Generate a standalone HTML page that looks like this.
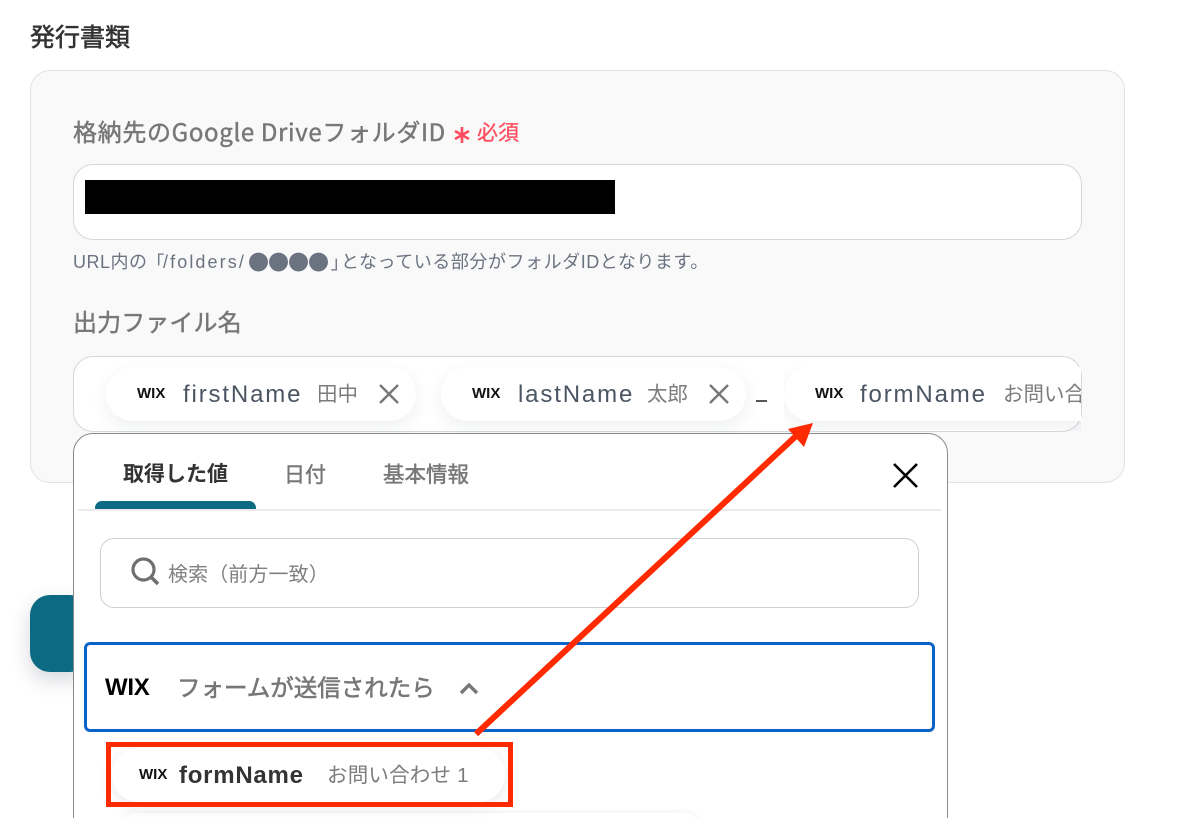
<!DOCTYPE html>
<html lang="ja">
<head>
<meta charset="utf-8">
<style>
html,body{margin:0;padding:0;background:#fff;width:1192px;height:818px;overflow:hidden}
#p{position:absolute;left:0;top:0;width:1192px;height:818px;overflow:hidden;font-family:"Liberation Sans","Noto Sans CJK JP",sans-serif}
.a{position:absolute;white-space:nowrap;box-sizing:border-box}
.chip{background:#fff;border-radius:27px;box-shadow:0 6px 18px rgba(30,40,60,.07);height:54px}
.wix{font-weight:700;color:#111;letter-spacing:0}
.name{font-size:24px;color:#4b5563;letter-spacing:1.85px;line-height:30px}
.val{font-size:20.5px;color:#7c7c7c;line-height:28px}
.lab{font-family:"Noto Sans CJK JP","Liberation Sans",sans-serif;font-weight:400;-webkit-text-stroke:.45px currentColor}
.h{font-size:18px;line-height:26px;color:#6b7280;top:249px}
</style>
</head>
<body>
<div id="p">
<div class="a lab" style="left:30px;top:20px;font-size:25px;line-height:32px;color:#333;-webkit-text-stroke:.6px #333">発行書類</div>

<div class="a" style="left:30px;top:70px;width:1095px;height:413px;background:#f9f9fa;border:1px solid #dfe2e7;border-radius:20px"></div>

<div class="a lab" style="left:73px;top:115px;font-size:24px;line-height:32px;color:#777;letter-spacing:.66px">格納先のGoogle DriveフォルダID</div>
<svg class="a" style="left:454px;top:126px" width="16" height="18" viewBox="0 0 16 18"><path d="M8 1v16M1 5l14 8M15 5L1 13" stroke="#ff4d5e" stroke-width="2.6" fill="none"/></svg>
<div class="a lab" style="left:477px;top:118px;font-size:21px;line-height:28px;color:#ff4d5e;-webkit-text-stroke:.3px #ff4d5e">必須</div>

<div class="a" style="left:73px;top:164px;width:1009px;height:76px;background:#fff;border:1px solid #d3d7de;border-radius:20px"></div>
<div class="a" style="left:85px;top:180px;width:530px;height:34px;background:#000"></div>

<div class="a h" style="left:73px;letter-spacing:.5px">URL内の</div>
<div class="a h" style="left:155px;font-family:'Noto Sans CJK JP',sans-serif;font-feature-settings:'palt'">「</div>
<div class="a h" style="left:163px;letter-spacing:2.1px">/folders/</div>
<div class="a h" style="left:248px;font-family:'Noto Sans CJK JP',sans-serif;font-size:21px;letter-spacing:-1px">●●●●</div>
<div class="a h" style="left:331px;font-family:'Noto Sans CJK JP',sans-serif;font-feature-settings:'palt'">」</div>
<div class="a h" style="left:341px;letter-spacing:.55px">となっている部分がフォルダIDとなります。</div>

<div class="a lab" style="left:73px;top:305px;font-size:24px;line-height:32px;color:#777;letter-spacing:.1px">出力ファイル名</div>

<div class="a" style="left:73px;top:356px;width:1009px;height:76px;background:#fff;border:1px solid #d3d7de;border-radius:20px"></div>

<div class="a chip" style="left:106px;top:367px;width:310px"></div>
<div class="a wix" style="left:137px;top:385px;font-size:15px;line-height:18px">WIX</div>
<div class="a name" style="left:183px;top:380px">firstName</div>
<div class="a val" style="left:317px;top:381px">田中</div>
<svg class="a" style="left:377px;top:382px" width="24" height="24" viewBox="0 0 24 24"><path d="M3 3l18 18M21 3L3 21" stroke="#777" stroke-width="2.4" fill="none"/></svg>

<div class="a chip" style="left:441px;top:367px;width:305px"></div>
<div class="a wix" style="left:472px;top:385px;font-size:15px;line-height:18px">WIX</div>
<div class="a name" style="left:518px;top:380px">lastName</div>
<div class="a val" style="left:647px;top:381px">太郎</div>
<svg class="a" style="left:707px;top:382px" width="24" height="24" viewBox="0 0 24 24"><path d="M3 3l18 18M21 3L3 21" stroke="#777" stroke-width="2.4" fill="none"/></svg>

<div class="a" style="left:756px;top:400px;width:11px;height:2px;background:#555"></div>

<div class="a" style="left:784px;top:367px;width:297px;height:64px;overflow:hidden">
  <div class="a chip" style="left:0;top:0;width:330px"></div>
  <div class="a wix" style="left:31px;top:18px;font-size:15px;line-height:18px">WIX</div>
  <div class="a name" style="left:76px;top:13px">formName</div>
  <div class="a val" style="left:219px;top:14px">お問い合わせ 1</div>
</div>

<div class="a" style="left:30px;top:595px;width:60px;height:77px;background:#0c6a82;border-radius:20px;box-shadow:0 8px 20px rgba(30,40,60,.18)"></div>

<div class="a" style="left:73px;top:433px;width:875px;height:420px;background:#fff;border:1.5px solid #8a8a8a;border-radius:20px"></div>

<div class="a" style="left:123px;top:461px;font-size:21px;line-height:28px;font-weight:700;color:#333">取得した値</div>
<div class="a lab" style="left:284px;top:460px;font-size:21px;line-height:28px;color:#777">日付</div>
<div class="a lab" style="left:383px;top:460px;font-size:21.5px;line-height:28px;color:#777">基本情報</div>
<div class="a" style="left:78px;top:509px;width:863px;height:1.5px;background:#ebebeb"></div>
<div class="a" style="left:95px;top:501px;width:161px;height:8px;background:#0c6a82;border-radius:7px 7px 0 0"></div>
<svg class="a" style="left:891px;top:461px" width="29" height="29" viewBox="0 0 29 29"><path d="M3 3l23 23M26 3L3 26" stroke="#000" stroke-width="2.6" fill="none"/></svg>

<div class="a" style="left:100px;top:538px;width:819px;height:70px;background:#fff;border:1px solid #cfcfcf;border-radius:14px"></div>
<svg class="a" style="left:130px;top:556px" width="30" height="30" viewBox="0 0 30 30"><circle cx="13.5" cy="13.5" r="10.5" stroke="#6f6f6f" stroke-width="3.2" fill="none"/><path d="M21 21l7 7" stroke="#6f6f6f" stroke-width="3.6" fill="none"/></svg>
<div class="a" style="left:168px;top:561px;font-size:20px;line-height:28px;letter-spacing:.1px;color:#808080">検索（前方一致）</div>

<div class="a" style="left:84px;top:642px;width:851px;height:90px;border:3px solid #0a63c9;border-radius:6px;background:#fff"></div>
<div class="a wix" style="left:105px;top:674px;font-size:24px;line-height:28px;color:#000;letter-spacing:-.3px">WIX</div>
<div class="a lab" style="left:177px;top:671px;font-size:23.5px;line-height:30px;color:#777;-webkit-text-stroke:.6px #777">フォームが送信されたら</div>
<svg class="a" style="left:458px;top:680px" width="22" height="16" viewBox="0 0 22 16"><path d="M3 13l8-8 8 8" stroke="#777" stroke-width="3.4" fill="none"/></svg>

<div class="a" style="left:120px;top:813px;width:580px;height:30px;background:#fff;border-radius:27px;box-shadow:0 -1px 6px rgba(30,40,60,.06)"></div>
<div class="a" style="left:112px;top:748px;width:393px;height:54px;background:#fff;border-radius:27px;box-shadow:0 4px 16px rgba(30,40,60,.1)"></div>
<div class="a wix" style="left:139px;top:766px;font-size:15px;line-height:18px">WIX</div>
<div class="a" style="left:179px;top:761px;font-size:24px;line-height:30px;font-weight:700;color:#333;letter-spacing:.75px">formName</div>
<div class="a val" style="left:327px;top:762px;letter-spacing:.2px">お問い合わせ 1</div>
<div class="a" style="left:106px;top:742px;width:407px;height:65px;border:5px solid #ff2a00"></div>

<svg class="a" style="left:0;top:0" width="1192" height="818" viewBox="0 0 1192 818">
  <path d="M476 734L796 436" stroke="#ff2a00" stroke-width="6" fill="none"/>
  <path d="M813 423L788 429L804 447Z" fill="#ff2a00"/>
</svg>
</div>
</body>
</html>
